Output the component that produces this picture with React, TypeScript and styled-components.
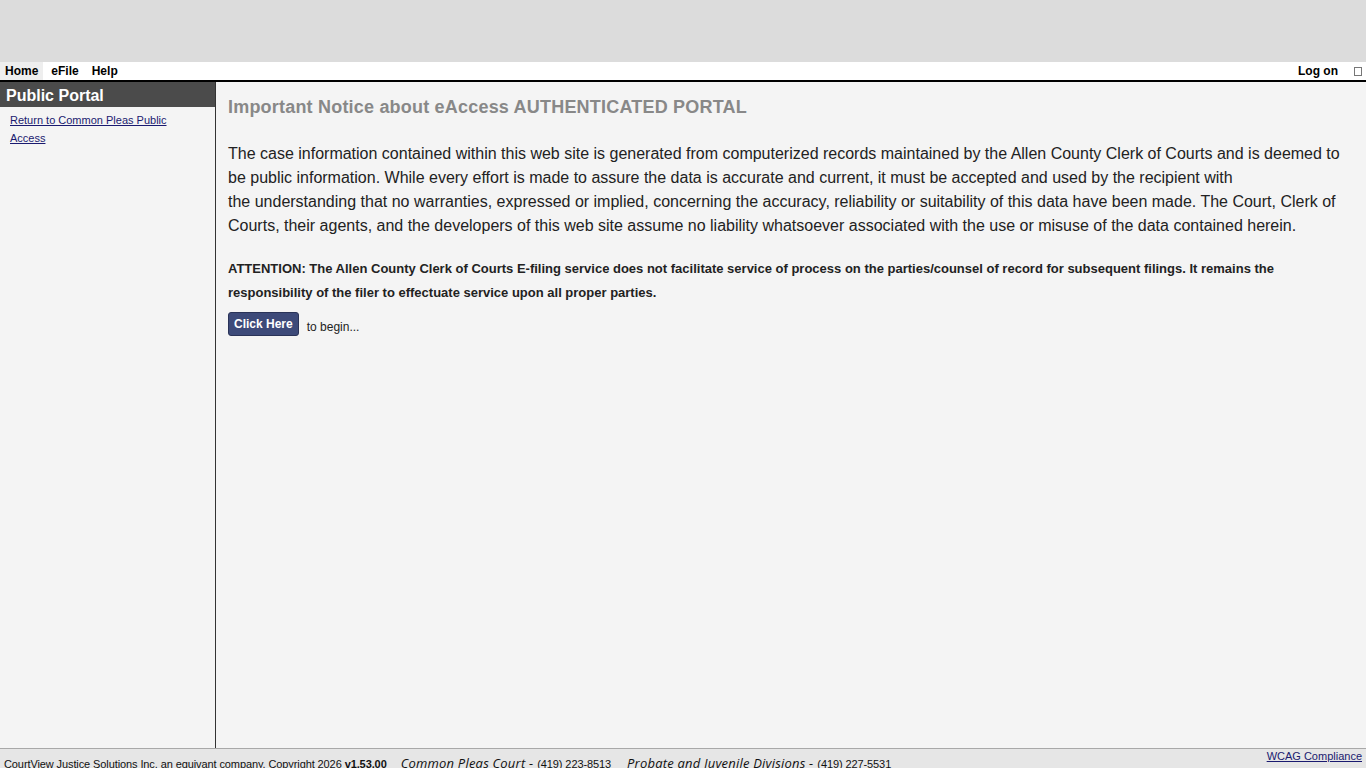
import React from "react";
import styled, { createGlobalStyle } from "styled-components";

const Global = createGlobalStyle`
  html, body { margin: 0; padding: 0; height: 100%; overflow: hidden; }
  body { font-family: "Liberation Sans", Arial, sans-serif; background: #f4f4f4; color: #222; }
  #root { height: 100%; }
`;

const Page = styled.div`
  display: flex;
  flex-direction: column;
  height: 768px;
  width: 1366px;
`;

const Banner = styled.div`
  height: 62px;
  background: #dcdcdc;
  flex: none;
`;

const NavBar = styled.div`
  display: flex;
  align-items: stretch;
  justify-content: space-between;
  height: 18px;
  background: #ffffff;
  border-bottom: 2px solid #000;
  flex: none;
`;

const NavGroup = styled.div`
  display: flex;
  align-items: stretch;
  gap: 3px;
`;

const NavItem = styled.a<{ $active?: boolean }>`
  display: flex;
  align-items: center;
  padding: 0 5px;
  font-size: 12px;
  font-weight: bold;
  color: #000;
  text-decoration: none;
  background: ${(p) => (p.$active ? "#eeeeee" : "transparent")};
`;

const LogOn = styled.a`
  display: flex;
  align-items: center;
  font-size: 12px;
  font-weight: bold;
  color: #000;
  text-decoration: none;
  margin-right: 13px;
`;

const Box = styled.span`
  display: inline-block;
  width: 6px;
  height: 7px;
  border: 1px solid #777;
  margin: 5px 4px 0 0;
`;

const Body = styled.div`
  display: flex;
  flex: 1;
  min-height: 0;
`;

const Sidebar = styled.div`
  width: 215px;
  flex: none;
  border-right: 1px solid #333;
  background: #f4f4f4;
`;

const SideHeader = styled.div`
  height: 25px;
  box-sizing: border-box;
  padding: 2px 0 0 6px;
  background: #4b4b4b;
  color: #fff;
  font-size: 16px;
  font-weight: bold;
  display: flex;
  align-items: center;
`;

const SideLinks = styled.div`
  padding: 4px 30px 0 10px;
  font-size: 11px;
  line-height: 18px;
`;

const SideLink = styled.a`
  font-size: 11px;
  color: #1a1a70;
  text-decoration: underline;
`;

const Main = styled.div`
  flex: 1;
  padding: 13px 12px 0 12px;
  background: #f4f4f4;
`;

const Title = styled.h1`
  margin: 0 0 23px 0;
  font-size: 18px;
  letter-spacing: 0.2px;
  line-height: 24px;
  font-weight: bold;
  color: #888888;
`;

const Para = styled.p`
  margin: 0 0 19px 0;
  font-size: 16px;
  line-height: 24px;
  color: #222;
`;

const Attention = styled.p`
  margin: 0 0 7px 0;
  font-size: 13px;
  line-height: 24px;
  font-weight: bold;
  color: #222;
`;

const BeginRow = styled.div`
  display: flex;
  align-items: center;
  gap: 8px;
`;

const Button = styled.button`
  height: 24px;
  padding: 0 5px;
  background: #3d4a79;
  color: #fff;
  border: 1px solid #2a3358;
  border-radius: 3px;
  font-family: "Liberation Sans", Arial, sans-serif;
  font-size: 12px;
  font-weight: bold;
  cursor: pointer;
`;

const BeginText = styled.span`
  font-size: 12px;
  color: #222;
  margin-top: 5px;
`;

const Footer = styled.div`
  height: 19px;
  flex: none;
  background: #e6e6e6;
  border-top: 1px solid #a8a8a8;
  display: flex;
  justify-content: space-between;
  align-items: flex-start;
  padding: 0 4px;
  overflow: hidden;
`;

const FootLeft = styled.div`
  display: flex;
  align-items: baseline;
  font-size: 11px;
  letter-spacing: -0.1px;
  color: #111;
  padding-top: 5px;
  white-space: nowrap;
`;

const Court = styled.span<{ $gap: number }>`
  font-family: "Open Sans", sans-serif;
  font-style: italic;
  font-size: 13px;
  letter-spacing: 0.2px;
  margin-left: ${(p) => p.$gap}px;
  margin-right: 4px;
`;

const Phone = styled.span`
  font-size: 11px;
`;

const FootLink = styled.a`
  font-size: 11px;
  color: #1a1a70;
  text-decoration: underline;
  padding-top: 1px;
`;

export default function App() {
  return (
    <Page>
      <Global />
      <Banner />
      <NavBar>
        <NavGroup>
          <NavItem $active href="#">Home</NavItem>
          <NavItem href="#">eFile</NavItem>
          <NavItem href="#">Help</NavItem>
        </NavGroup>
        <NavGroup>
          <LogOn href="#">Log on</LogOn>
          <Box />
        </NavGroup>
      </NavBar>
      <Body>
        <Sidebar>
          <SideHeader>Public Portal</SideHeader>
          <SideLinks>
            <SideLink href="#">Return to Common Pleas Public Access</SideLink>
          </SideLinks>
        </Sidebar>
        <Main>
          <Title>Important Notice about eAccess AUTHENTICATED PORTAL</Title>
          <Para>
            The case information contained within this web site is generated from computerized records maintained by the Allen County Clerk of Courts and is deemed to be public information. While every effort is made to assure the data is accurate and current, it must be accepted and used by the recipient with
            <br />
            the understanding that no warranties, expressed or implied, concerning the accuracy, reliability or suitability of this data have been made. The Court, Clerk of Courts, their agents, and the developers of this web site assume no liability whatsoever associated with the use or misuse of the data contained herein.
          </Para>
          <Attention>
            ATTENTION: The Allen County Clerk of Courts E-filing service does not facilitate service of process on the parties/counsel of record for subsequent filings. It remains the responsibility of the filer to effectuate service upon all proper parties.
          </Attention>
          <BeginRow>
            <Button>Click Here</Button>
            <BeginText>to begin...</BeginText>
          </BeginRow>
        </Main>
      </Body>
      <Footer>
        <FootLeft>
          <span>
            CourtView Justice Solutions Inc. an equivant company. Copyright 2026 <b>v1.53.00</b>
          </span>
          <Court $gap={14}>Common Pleas Court -</Court>
          <Phone>(419) 223-8513</Phone>
          <Court $gap={16}>Probate and Juvenile Divisions -</Court>
          <Phone>(419) 227-5531</Phone>
        </FootLeft>
        <FootLink href="#">WCAG Compliance</FootLink>
      </Footer>
    </Page>
  );
}
